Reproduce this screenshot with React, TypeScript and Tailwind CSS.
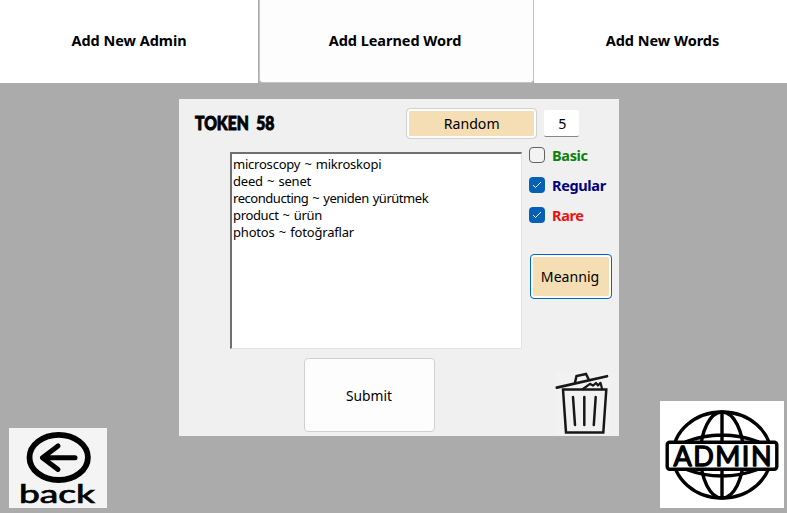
import React from "react";

const words = [
  { text: "microscopy ~ mikroskopi", tracking: "tracking-[-0.22px]" },
  { text: "deed ~ senet", tracking: "tracking-[-0.2px]" },
  { text: "reconducting ~ yeniden yürütmek", tracking: "tracking-[-0.46px]" },
  { text: "product ~ ürün", tracking: "tracking-[-0.34px]" },
  { text: "photos ~ fotoğraflar", tracking: "tracking-[-0.18px]" },
];

function Check({ label, color, checked }: { label: string; color: string; checked?: boolean }) {
  return (
    <label className="flex h-[30px] items-center gap-[7px]">
      <span
        className={
          checked
            ? "flex h-4 w-4 items-center justify-center rounded-[4px] bg-[#0560b6]"
            : "h-4 w-4 rounded-[4px] border border-[#626262] bg-[#f3f3f3]"
        }
      >
        {checked && (
          <svg width="10" height="8" viewBox="0 0 10 8" fill="none" stroke="#fff">
            <path d="M1 4l2.5 2.5L9 1" />
          </svg>
        )}
      </span>
      <span className={"text-[14.5px] leading-none font-bold tracking-[-0.35px] " + color}>{label}</span>
    </label>
  );
}

function Trash() {
  return (
    <svg width="58" height="63" viewBox="0 0 58 63" fill="none" stroke="#171717" strokeLinecap="round">
      <path d="M1 0H55V62H1Z" fill="#f2f2f2" stroke="none" />
      <path d="M8 17.5L11 60.5H48.3L51.3 17.5Z" strokeWidth="2.5" />
      <path d="M1.8 15.6L52 4.2" strokeWidth="2.7" />
      <path d="M20 10.5L21.5 4L31 2L33.5 7" strokeWidth="2.5" />
      <path d="M28 17L35 11.8L38 13.6L41 11L43 13.5L45.5 10.8L47 16.5" strokeWidth="2.2" strokeLinejoin="round" />
      <path d="M18 25L20 53M29.3 25V53M40.7 25L38.8 53" strokeWidth="2.5" />
    </svg>
  );
}

function Back() {
  return (
    <button className="block h-20 w-[98px] bg-[#f4f4f4]">
      <svg width="98" height="80" viewBox="0 0 98 80" fill="none" stroke="#000">
        <ellipse cx="49.7" cy="29.4" rx="29.2" ry="22.6" strokeWidth="5.8" />
        <path d="M66 29.7H34M49 18L33.5 29.7L49 41.4" strokeWidth="5" strokeLinecap="round" strokeLinejoin="round" />
        <text x="10" y="75" textLength="76" lengthAdjust="spacingAndGlyphs" fill="#000" stroke="#000" strokeWidth="0.7" fontFamily="Lato, sans-serif" fontWeight="400" fontSize="24.5">
          back
        </text>
      </svg>
    </button>
  );
}

function Admin() {
  return (
    <button className="block h-[107px] w-[124px] bg-white">
      <svg width="124" height="107" viewBox="0 0 124 107" fill="none" stroke="#000" strokeWidth="3.4">
        <ellipse cx="62" cy="54" rx="49" ry="43" />
        <ellipse cx="62" cy="54" rx="21.5" ry="43" />
        <path d="M62 11V97M25 41Q62 27 99 41M25 68Q62 82 99 68" />
        <rect x="7.2" y="41.2" width="109.6" height="27" rx="2.5" fill="#fff" />
        <text x="13.5" y="64.5" textLength="98" lengthAdjust="spacing" fill="#000" strokeWidth="1.3" strokeLinejoin="round" fontFamily="Lato, sans-serif" fontWeight="400" fontSize="27">
          ADMIN
        </text>
      </svg>
    </button>
  );
}

export default function App() {
  return (
    <main className="flex h-[513px] w-[787px] flex-col overflow-hidden bg-[#ababab] font-['Noto_Sans','Liberation_Sans',sans-serif] text-black">
      <nav className="flex h-[83px] text-[14.5px] font-bold tracking-[-0.03px]">
        <button className="w-[258px] bg-white pb-px">Add New Admin</button>
        <button className="ml-px w-[275px] rounded-b-[4px] border-x border-b border-[#c4c4c4] bg-[#fdfdfd] pr-[3px]">
          Add Learned Word
        </button>
        <button className="flex-1 bg-white pb-px pl-1">Add New Words</button>
      </nav>
      <div className="flex flex-1">
        <aside className="flex w-[179px] items-end pb-[5px] pl-[9px]">
          <Back />
        </aside>
        <section className="mt-4 flex h-[337px] w-[440px] bg-[#f0f0f0]">
          <div className="flex w-[344px] flex-col">
            <div className="flex h-[53px]">
              <h1 className="w-[227px] pt-[15px] pl-4 font-['Lato','Open_Sans',sans-serif] text-[18px] leading-[18px] font-black">
                <span className="inline-block origin-left scale-x-[0.87] [-webkit-text-stroke:0.9px_black]">TOKEN&nbsp; 58</span>
              </h1>
              <button className="mt-[9px] -mr-[14px] h-[31px] w-[131px] rounded-[4px] border border-[#d0d0d0] bg-[#f5deb3] pb-px text-[15px] leading-none shadow-[inset_0_0_0_2px_#fdfdfd]">
                <span className="inline-block scale-x-[0.94]">Random</span>
              </button>
            </div>
            <div className="ml-[51px] h-[197px] w-[292px] border-t-2 border-r border-b border-l-2 border-t-[#707070] border-r-[#e3e3e3] border-b-[#e3e3e3] border-l-[#707070] bg-white pt-[2px] pl-px text-[13px] leading-[17px] [word-spacing:1px]">
              {words.map((w) => (
                <p key={w.text} className={"whitespace-nowrap " + w.tracking}>{w.text}</p>
              ))}
            </div>
            <button className="mt-[9px] ml-[125px] h-[74px] w-[131px] rounded-[4px] border border-[#d0d0d0] bg-[#fdfdfd] pr-px text-[15px]">
              <span className="inline-block scale-x-[0.92]">Submit</span>
            </button>
          </div>
          <div className="flex flex-1 flex-col pl-[6px]">
            <div className="mt-[11px] ml-[15px] flex h-[27px] w-[35px] shrink-0 items-center justify-center rounded-[2px] border-b border-[#868686] bg-white pl-px text-[15px]">
              <span className="scale-x-[0.95]">5</span>
            </div>
            <div className="mt-[3px]">
              <Check label="Basic" color="text-[#0a820a]" />
              <Check label="Regular" color="text-[#000080]" checked />
              <Check label="Rare" color="text-[#ee1111]" checked />
            </div>
            <button className="mt-6 ml-px h-[45px] w-[82px] shrink-0 rounded-[4px] border border-[#0067c0] bg-[#f5deb3] pr-px pb-px text-[15px] shadow-[inset_0_0_0_2px_#fdfdfd]">
              <span className="inline-block scale-x-[0.94]">Meannig</span>
            </button>
            <div className="mt-[73px] ml-[26px]">
              <Trash />
            </div>
          </div>
        </section>
        <aside className="flex flex-1 items-end justify-end pr-[3px] pb-[5px]">
          <Admin />
        </aside>
      </div>
    </main>
  );
}
